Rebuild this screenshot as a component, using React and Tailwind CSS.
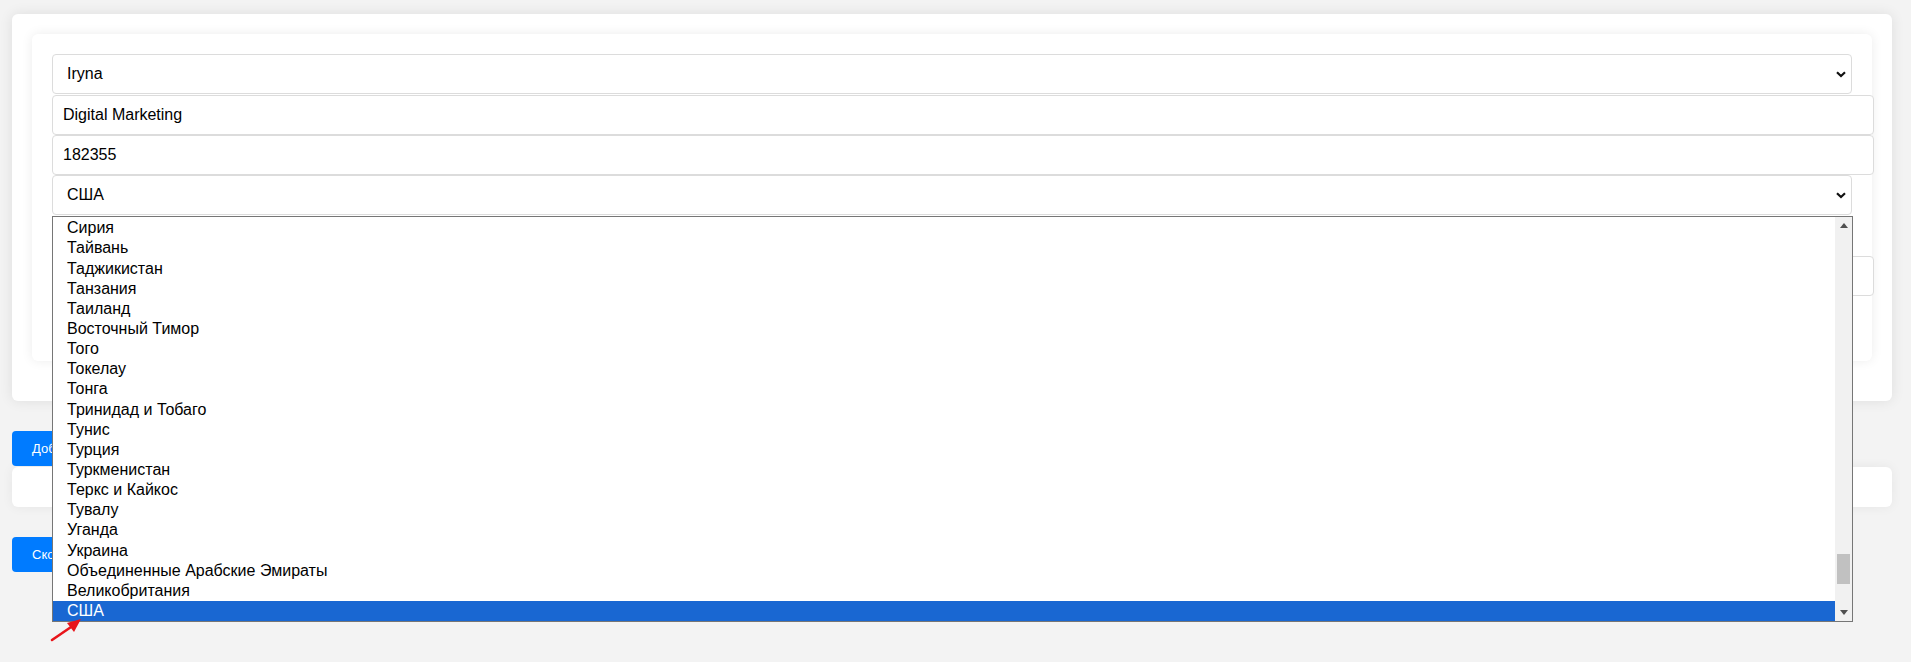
import React from "react";

const countries = [
  "Сирия",
  "Тайвань",
  "Таджикистан",
  "Танзания",
  "Таиланд",
  "Восточный Тимор",
  "Того",
  "Токелау",
  "Тонга",
  "Тринидад и Тобаго",
  "Тунис",
  "Турция",
  "Туркменистан",
  "Теркс и Кайкос",
  "Тувалу",
  "Уганда",
  "Украина",
  "Объединенные Арабские Эмираты",
  "Великобритания",
  "США",
];

const Chevron = () => (
  <svg width="10" height="7" viewBox="0 0 10 7" className="shrink-0">
    <polyline points="1,1.2 5,5 9,1.2" fill="none" stroke="#111" strokeWidth="2.2" />
  </svg>
);

const FakeSelect = ({ value, className = "" }) => (
  <div
    className={`h-10 flex items-center justify-between pl-[14px] pr-[5px] bg-white border border-[#dcdcdc] rounded-[4px] text-[16px] text-black ${className}`}
  >
    <span>{value}</span>
    <Chevron />
  </div>
);

const FakeInput = ({ value, className = "" }) => (
  <div
    className={`h-10 w-[calc(100%+22px)] flex items-center pl-[10px] bg-white border border-[#dcdcdc] rounded-[4px] text-[16px] text-black ${className}`}
  >
    {value}
  </div>
);

const Triangle = ({ up }) => (
  <div className="h-[17px] flex items-center justify-center">
    <svg width="8" height="5" viewBox="0 0 8 5">
      {up ? (
        <polygon points="0,5 8,5 4,0" fill="#505050" />
      ) : (
        <polygon points="0,0 8,0 4,5" fill="#505050" />
      )}
    </svg>
  </div>
);

export default function App() {
  return (
    <div className="relative min-h-screen bg-[#f3f3f3] pl-3 pr-[19px] pt-[14px] pb-10 font-['Liberation_Sans',Arial,sans-serif]">
      <div className="rounded-md bg-white pt-5 px-5 pb-10 shadow-[0_0_14px_rgba(0,0,0,0.09)]">
        <div className="rounded-md bg-white p-5 shadow-[0_0_12px_rgba(0,0,0,0.08)]">
          <FakeSelect value="Iryna" />
          <FakeInput value="Digital Marketing" className="mt-px" />
          <FakeInput value="182355" />
          <FakeSelect value="США" />
          <FakeSelect value="" className="mt-px" />
          <FakeInput value="" />
          <div className="h-[45px]" />
        </div>
      </div>

      <button className="mt-[30px] h-[35px] px-5 rounded-[4px] bg-[#007bff] text-white text-[13px]">
        Добавить
      </button>
      <div className="mt-px h-10 rounded-md bg-white shadow-[0_0_12px_rgba(0,0,0,0.06)]" />
      <button className="mt-[30px] h-[35px] px-5 rounded-[4px] bg-[#007bff] text-white text-[13px]">
        Скопировать
      </button>

      {/* open dropdown of the country select */}
      <div className="absolute left-[52px] top-[216px] w-[1801px] h-[406px] flex bg-white border border-[#767676]">
        <div className="flex-1 flex flex-col justify-end overflow-hidden">
          {countries.map((c) => (
            <div
              key={c}
              className={`h-[20.15px] shrink-0 flex items-center pl-[14px] text-[16px] leading-none ${
                c === "США" ? "bg-[#1967d2] text-white" : "text-black"
              }`}
            >
              {c}
            </div>
          ))}
        </div>
        <div className="w-[17px] flex flex-col bg-[#f1f1f1]">
          <Triangle up />
          <div className="flex-1 px-[2px]">
            <div className="mt-[320px] h-[30px] bg-[#c1c1c1]" />
          </div>
          <Triangle />
        </div>
      </div>

      {/* annotation arrow */}
      <svg className="absolute left-[46px] top-[614px]" width="40" height="32" viewBox="0 0 40 32">
        <line x1="6" y1="26" x2="28" y2="11" stroke="#e8141a" strokeWidth="2.6" strokeLinecap="round" />
        <polygon points="35,5 21,9 28,18" fill="#e8141a" />
      </svg>
    </div>
  );
}
